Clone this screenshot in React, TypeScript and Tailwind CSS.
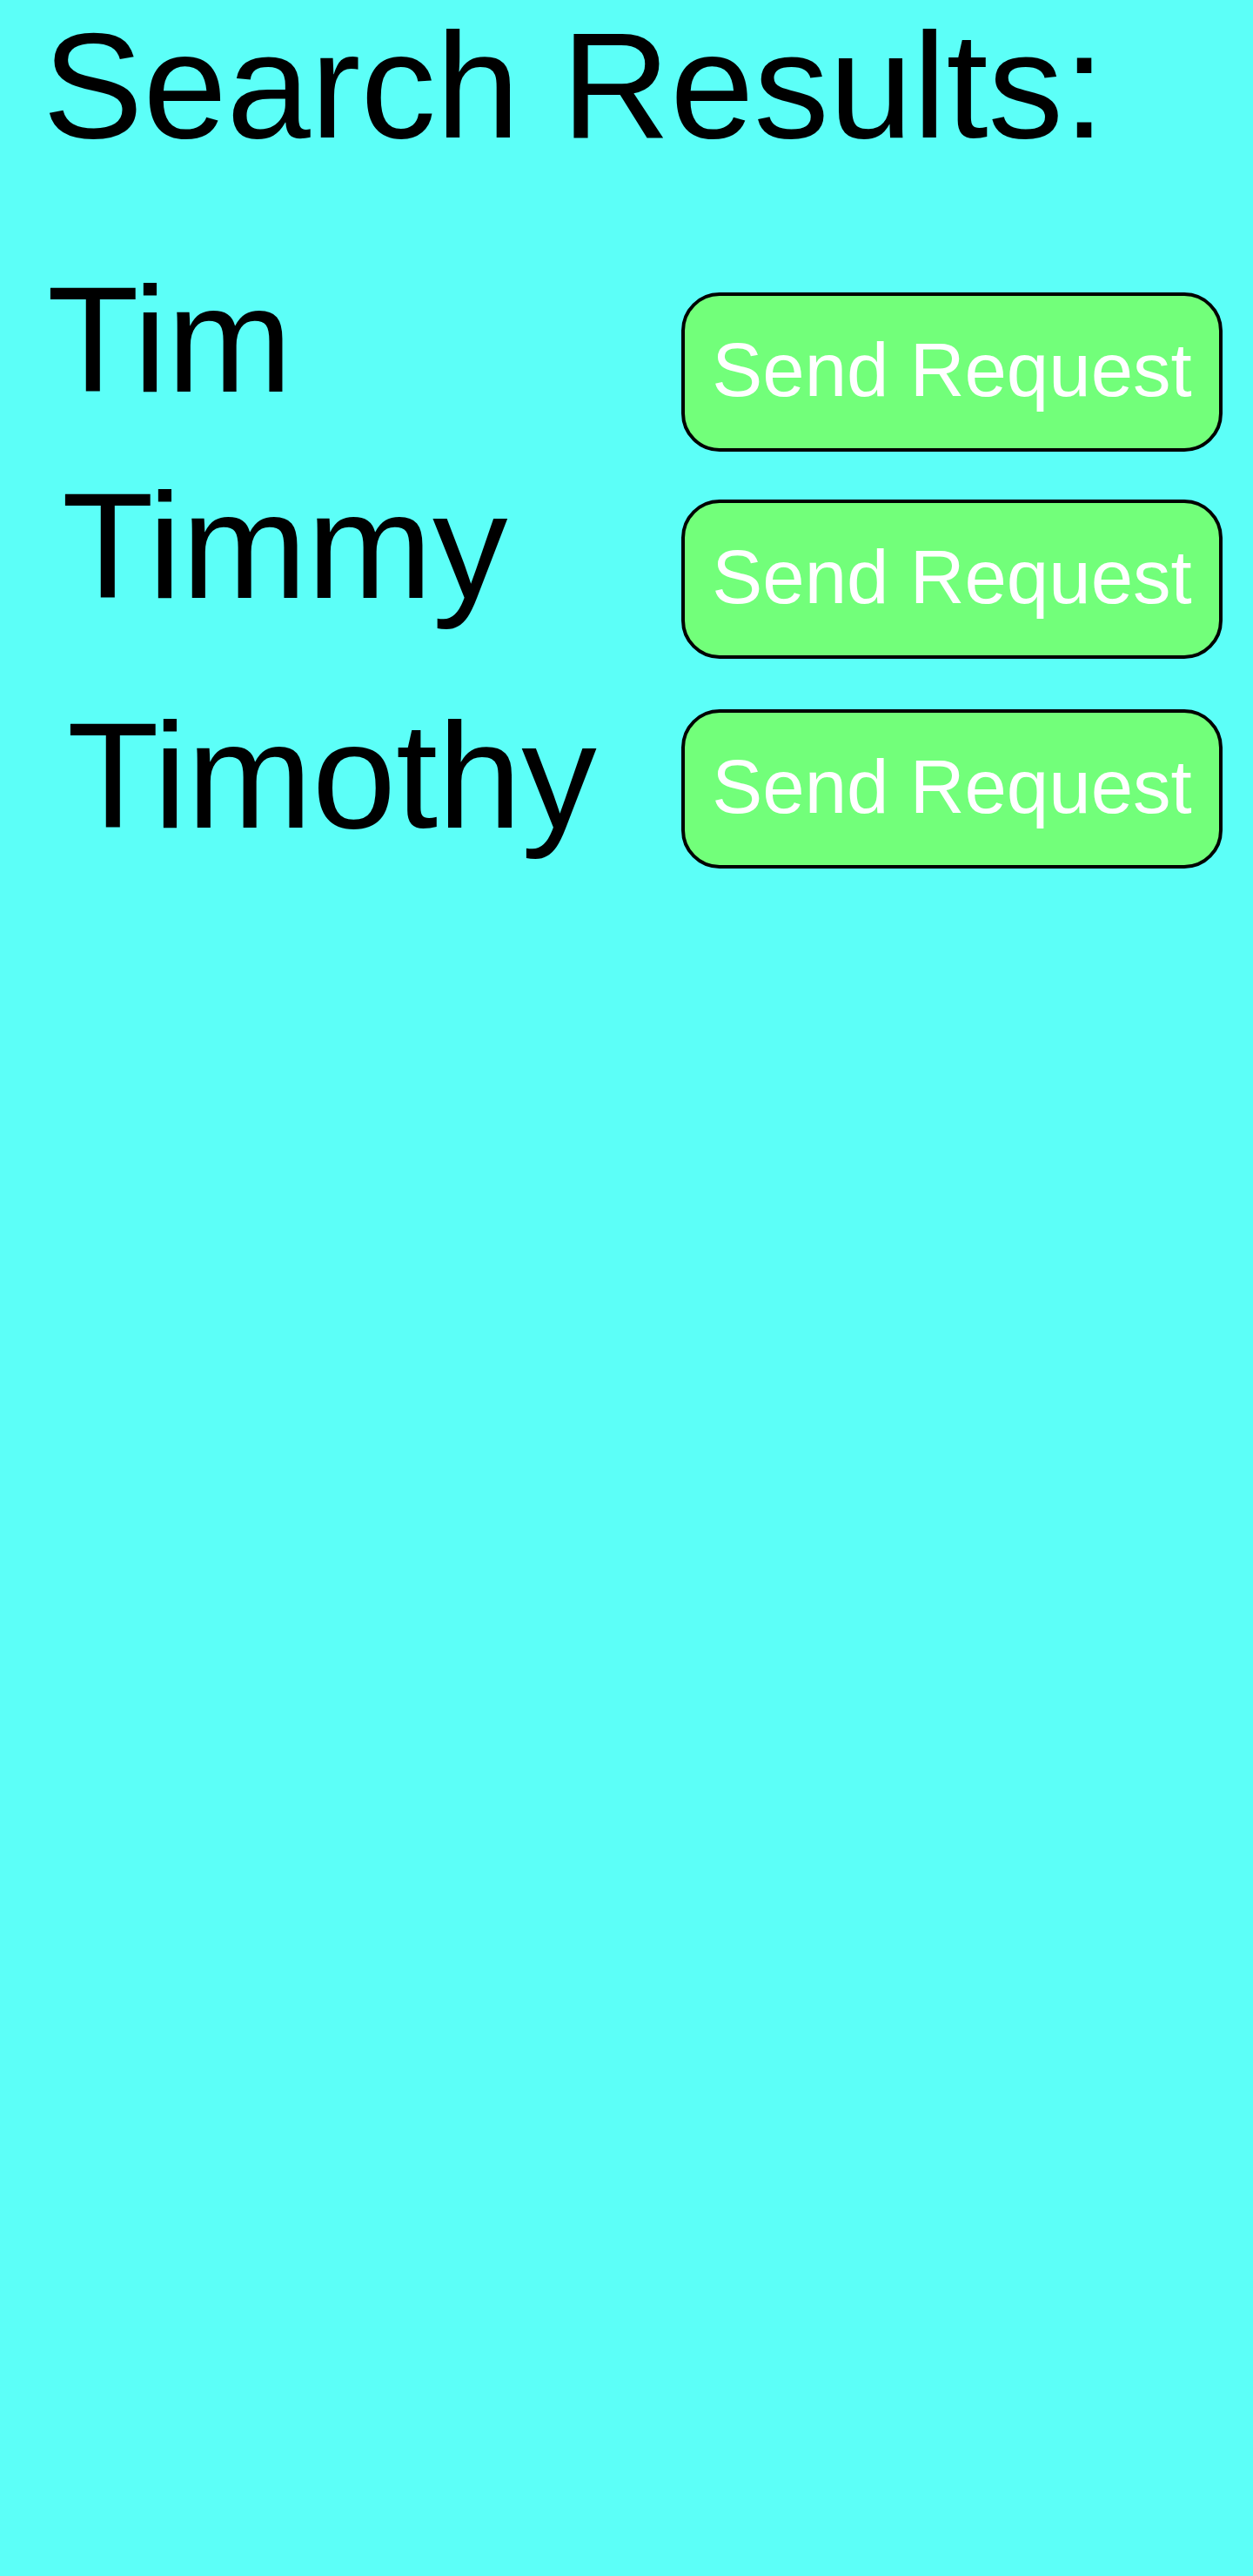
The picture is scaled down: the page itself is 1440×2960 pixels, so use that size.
import React from 'react';

const results = [
    { name: 'Tim', pad: 'pl-[54px]', rowGap: 'mt-[119px]', btnTop: 'mt-[32px]' },
    { name: 'Timmy', pad: 'pl-[71px]', rowGap: 'mt-[22px]', btnTop: 'mt-[33px]' },
    { name: 'Timothy', pad: 'pl-[77px]', rowGap: 'mt-[48px]', btnTop: 'mt-[10px]' },
];

export default function App() {
    return (
        <div className="min-h-[2960px] w-full bg-[#5cfff8] font-['Liberation_Sans',Arial,sans-serif] text-black">
            <h1 className="pl-[49px] pt-[12px] text-[173px] leading-none font-normal">Search Results:</h1>

            {results.map((r) => (
                <div key={r.name} className={`flex items-start justify-between pr-[35px] ${r.rowGap}`}>
                    <span className={`text-[173px] leading-none ${r.pad}`}>{r.name}</span>
                    <button
                        className={`flex h-[183px] w-[622px] items-center justify-center rounded-[44px] border-4 border-black bg-[#72ff7a] pb-[6px] text-[87px] leading-none text-white ${r.btnTop}`}
                    >
                        Send Request
                    </button>
                </div>
            ))}
        </div>
    );
}
